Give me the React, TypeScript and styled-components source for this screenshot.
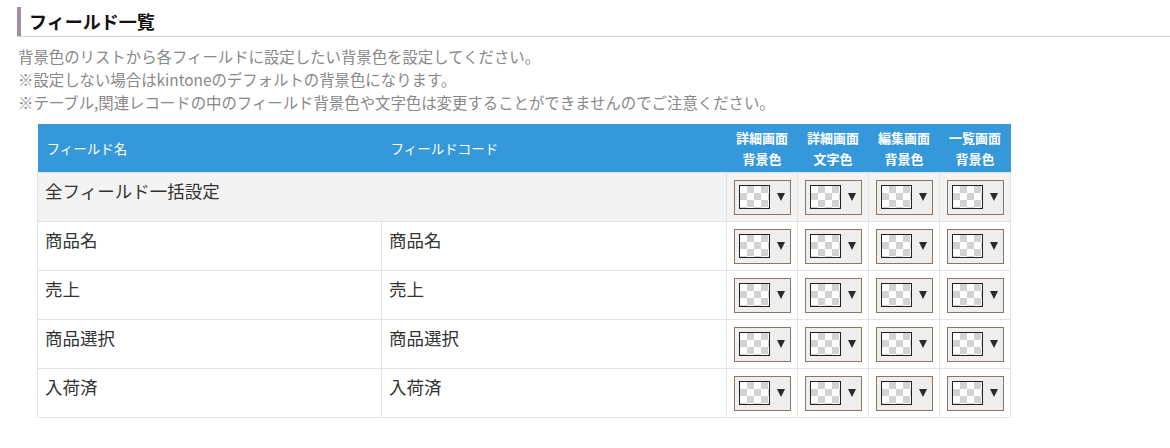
import React from "react";
import styled, { createGlobalStyle } from "styled-components";

const Global = createGlobalStyle`
  html, body { margin: 0; padding: 0; background: #fff; }
  body { font-family: "Noto Sans CJK JP", "Noto Sans", sans-serif; color: #333; }
`;

const Page = styled.div`
  padding: 7px 0 0 17px;
`;

const HeadingWrap = styled.div`
  border-bottom: 1px solid #d0d0d0;
`;

const Heading = styled.h2`
  margin: 0;
  border-left: 4px solid #9d8fa6;
  padding-left: 8px;
  height: 29px;
  line-height: 28px;
  font-size: 18px;
  font-weight: 700;
  color: #111;
`;

const Notes = styled.div`
  margin-top: 8px;
  font-size: 15.4px;
  line-height: 23px;
  color: #888;
  padding-left: 1px;
`;

const Table = styled.table`
  margin: 10px 0 0 20px;
  border-collapse: collapse;
  table-layout: fixed;
  width: 973px;
`;

const HeadCell = styled.th<{ $center?: boolean }>`
  background: #3498db;
  color: #fff;
  height: 48px;
  padding: 0 ${(p) => (p.$center ? "0" : "9px")};
  text-align: ${(p) => (p.$center ? "center" : "left")};
  font-size: ${(p) => (p.$center ? "13px" : "13.5px")};
  font-weight: ${(p) => (p.$center ? 700 : 400)};
  line-height: 21px;
  vertical-align: middle;
`;

const Row = styled.tr<{ $all?: boolean }>`
  background: ${(p) => (p.$all ? "#f3f3f3" : "#fff")};
`;

const Cell = styled.td`
  border: 1px solid #e3e3e3;
  height: 49px;
  box-sizing: border-box;
  padding: 5px 7px 0;
  vertical-align: top;
  font-size: 17.5px;
  line-height: 25px;
  color: #333;
`;

const PickCell = styled.td`
  border: 1px solid #e3e3e3;
  height: 49px;
  box-sizing: border-box;
  padding: 0;
  vertical-align: middle;
  text-align: center;
`;

const Picker = styled.div`
  display: inline-flex;
  align-items: center;
  box-sizing: border-box;
  width: 57px;
  height: 35px;
  border: 1px solid #8d7560;
  background: #eeeeee;
  padding: 0 0 0 4px;
  vertical-align: middle;
`;

const Swatch = styled.span`
  display: block;
  box-sizing: border-box;
  width: 31px;
  height: 24px;
  border: 1px solid #222;
  background-color: #fff;
  background-image:
    linear-gradient(45deg, #d2d2d2 25%, transparent 25%, transparent 75%, #d2d2d2 75%),
    linear-gradient(45deg, #d2d2d2 25%, transparent 25%, transparent 75%, #d2d2d2 75%);
  background-size: 14px 14px;
  background-position: 0 0, 7px 7px;
`;

const Arrow = styled.span`
  display: block;
  width: 0;
  height: 0;
  margin-left: 7px;
  border-left: 4px solid transparent;
  border-right: 4px solid transparent;
  border-top: 8px solid #2a2a2a;
`;

const ColorPicker = () => (
  <Picker>
    <Swatch />
    <Arrow />
  </Picker>
);

const fields = ["商品名", "売上", "商品選択", "入荷済"];

const Pickers = () => (
  <>
    {[0, 1, 2, 3].map((i) => (
      <PickCell key={i}>
        <ColorPicker />
      </PickCell>
    ))}
  </>
);

export default function App() {
  return (
    <>
      <Global />
      <Page>
        <HeadingWrap>
          <Heading>フィールド一覧</Heading>
        </HeadingWrap>
        <Notes>
          <div>背景色のリストから各フィールドに設定したい背景色を設定してください。</div>
          <div>※設定しない場合はkintoneのデフォルトの背景色になります。</div>
          <div>※テーブル,関連レコードの中のフィールド背景色や文字色は変更することができませんのでご注意ください。</div>
        </Notes>
        <Table>
          <colgroup>
            <col style={{ width: 344 }} />
            <col style={{ width: 345 }} />
            <col style={{ width: 71 }} />
            <col style={{ width: 71 }} />
            <col style={{ width: 71 }} />
            <col style={{ width: 71 }} />
          </colgroup>
          <thead>
            <tr>
              <HeadCell>フィールド名</HeadCell>
              <HeadCell>フィールドコード</HeadCell>
              <HeadCell $center>詳細画面<br />背景色</HeadCell>
              <HeadCell $center>詳細画面<br />文字色</HeadCell>
              <HeadCell $center>編集画面<br />背景色</HeadCell>
              <HeadCell $center>一覧画面<br />背景色</HeadCell>
            </tr>
          </thead>
          <tbody>
            <Row $all>
              <Cell colSpan={2}>全フィールド一括設定</Cell>
              <Pickers />
            </Row>
            {fields.map((f) => (
              <Row key={f}>
                <Cell>{f}</Cell>
                <Cell>{f}</Cell>
                <Pickers />
              </Row>
            ))}
          </tbody>
        </Table>
      </Page>
    </>
  );
}
